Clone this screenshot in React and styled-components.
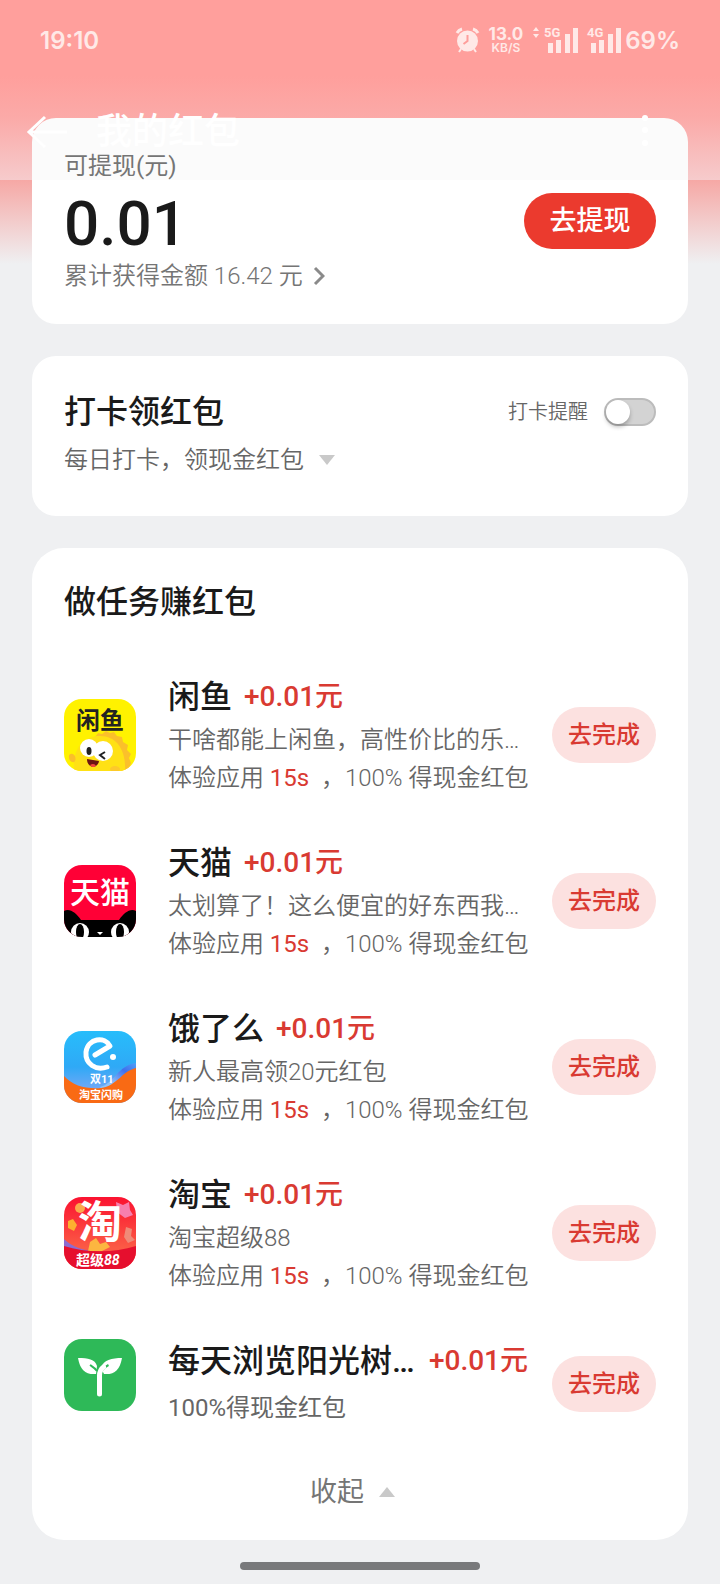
import { useState } from "react";
import { createGlobalStyle, styled } from "styled-components";

const tasks = [
  {
    id: "xianyu",
    name: "闲鱼",
    desc: "干啥都能上闲鱼，高性价比的乐…",
    icon: <XianyuIcon />,
  },
  {
    id: "tmall",
    name: "天猫",
    desc: "太划算了！这么便宜的好东西我…",
    icon: <TmallIcon />,
  },
  {
    id: "eleme",
    name: "饿了么",
    desc: "新人最高领20元红包",
    icon: <ElemeIcon />,
  },
  {
    id: "taobao",
    name: "淘宝",
    desc: "淘宝超级88",
    icon: <TaobaoIcon />,
  },
];

export default function App() {
  const [remind, setRemind] = useState(false);

  return (
    <Page>
      <GlobalStyle />
      <Header>
        <StatusBar>
          <span>19:10</span>
          <StatusIcons>
            <AlarmIcon />
            <Speed>
              <b>13.0</b>
              <small>KB/S</small>
            </Speed>
            <Signals>
              <DataArrows />
              <Signal label="5G" />
            </Signals>
            <Signals>
              <Signal label="4G" />
              <span>69%</span>
            </Signals>
          </StatusIcons>
        </StatusBar>
        <NavBar>
          <IconButton aria-label="返回">
            <svg width="44" height="36" fill="none" stroke="#fff" strokeWidth="3">
              <path d="M21 3 5 18l16 15M5 18h38" />
            </svg>
          </IconButton>
          <h1>我的红包</h1>
          <IconButton aria-label="更多">
            <svg width="8" height="36" fill="#fff">
              <circle cx="4" cy="4" r="3" />
              <circle cx="4" cy="16" r="3" />
              <circle cx="4" cy="29" r="3" />
            </svg>
          </IconButton>
        </NavBar>
      </Header>

      <Content>
        <BalanceCard>
          <BalanceInfo>
            <BalanceLabel>可提现(元)</BalanceLabel>
            <Amount>0.01</Amount>
            <TotalLink href="#total">
              累计获得金额 16.42 元
              <svg width="12" height="20" fill="none" stroke="#8a8a8a" strokeWidth="3">
                <path d="m2 2 8 8-8 8" />
              </svg>
            </TotalLink>
          </BalanceInfo>
          <WithdrawButton>去提现</WithdrawButton>
        </BalanceCard>

        <Card>
          <CheckInHead>
            <h2>打卡领红包</h2>
            <RemindLabel>
              打卡提醒
              <Switch
                type="checkbox"
                role="switch"
                checked={remind}
                onChange={() => setRemind(!remind)}
              />
            </RemindLabel>
          </CheckInHead>
          <CheckInButton>
            每日打卡，领现金红包
            <Triangle />
          </CheckInButton>
        </Card>

        <TaskCard>
          <h2>做任务赚红包</h2>
          <TaskList>
            {tasks.map((task) => (
              <Task key={task.id}>
                {task.icon}
                <TaskBody>
                  <TaskHead>
                    <h3>{task.name}</h3>
                    <Reward>+0.01元</Reward>
                  </TaskHead>
                  <TaskLine>{task.desc}</TaskLine>
                  <TaskLine>
                    体验应用 <em>15s</em>
                    {"  "}，100% 得现金红包
                  </TaskLine>
                </TaskBody>
                <TaskButton>去完成</TaskButton>
              </Task>
            ))}
            <Task>
              <SproutIcon />
              <TaskBody>
                <TaskHead $fill>
                  <h3>每天浏览阳光树…</h3>
                  <Reward>+0.01元</Reward>
                </TaskHead>
                <TaskNote>100%得现金红包</TaskNote>
              </TaskBody>
              <TaskButton>去完成</TaskButton>
            </Task>
          </TaskList>
          <FoldButton>
            收起
            <Triangle up />
          </FoldButton>
        </TaskCard>
      </Content>
      <HomeBar />
    </Page>
  );
}

function Triangle({ up }) {
  return (
    <svg width="46" height="10" fill="#c9c9c9">
      <path d={up ? "M15 10 23 0l8 10z" : "M15 0h16l-8 10z"} />
    </svg>
  );
}

function AlarmIcon() {
  return (
    <svg width="25" height="26" fill="#ffe9e7">
      <path
        d="M2 6a8 8 0 0 1 5-4M23 6a8 8 0 0 0-5-4"
        fill="none"
        stroke="#ffe9e7"
        strokeWidth="3"
      />
      <circle cx="12.500" cy="14" r="10.500" />
      <path d="m6 22-2 3M19 22l2 3" stroke="#ffe9e7" strokeWidth="2" />
      <path d="M12.500 8v6l-4 3" fill="none" stroke="#fe9e9b" strokeWidth="2" />
    </svg>
  );
}

function DataArrows() {
  return (
    <svg width="8" height="26" fill="#ffe9e7">
      <path d="M1 4 4 0l3 4zM1 7h6l-3 4z" />
    </svg>
  );
}

function Signal({ label }) {
  return (
    <SignalIcon width="34" height="26" fill="#ffe9e7">
      <text x="0" y="10" fontFamily="Roboto" fontSize="13" fontWeight="700">
        {label}
      </text>
      <path d="M4 16h5v10H4zM12 13h5v13h-5zM21 7h5v19h-5zM29 1h5v25h-5z" />
    </SignalIcon>
  );
}

function XianyuIcon() {
  return (
    <AppIcon viewBox="0 0 72 72">
      <rect width="72" height="72" fill="#fff200" />
      <path
        d="M31 38l3-4 4 1 4-3 4 2 4-1 3 4 5 1 1 5 5 3-1 5 4 4-2 4 2 5-3 8H40z"
        fill="#fbc02a"
      />
      <path d="M10 72C8 50 19 37 36 37c18 0 26 16 25 35z" fill="#ffe115" />
      <path d="M5 56c4-4 8 2 6 6-2 3-7 0-6-6z" fill="#fbbf2a" />
      <ellipse cx="51" cy="70" rx="5" ry="3" fill="#fdc92b" />
      <circle cx="25" cy="49" r="9" fill="#fff" />
      <circle cx="39" cy="52" r="10" fill="#fff" />
      <ellipse cx="25" cy="52" rx="2.500" ry="4" fill="#222" />
      <path d="m41 53-5 3 5 4" fill="none" stroke="#222" strokeWidth="2" />
      <path d="M23 60l12 2c-1 8-12 8-12-2z" fill="#6d1512" />
      <path d="M26 66c3-2 5-1 6 1-2 2-5 1-6-1z" fill="#f4473d" />
      <text x="12" y="30" fontSize="24" fontWeight="700" fill="#222">
        闲鱼
      </text>
    </AppIcon>
  );
}

function TmallIcon() {
  return (
    <AppIcon viewBox="0 0 72 72">
      <rect width="72" height="72" fill="#ff0036" />
      <text x="6" y="38" fontSize="30" fontWeight="500" fill="#fff">
        天猫
      </text>
      <path d="M0 46c6-3 12 2 17 9h38c5-7 11-12 17-9v26H0z" fill="#000" />
      <ellipse cx="16" cy="67" rx="9" ry="9" fill="#fff" />
      <ellipse cx="56" cy="67" rx="9" ry="9" fill="#fff" />
      <ellipse cx="16" cy="67" rx="4" ry="8" fill="#000" />
      <ellipse cx="56" cy="67" rx="4" ry="8" fill="#000" />
      <path d="M33 67h6l-3 3z" fill="#fff" />
    </AppIcon>
  );
}

function ElemeIcon() {
  return (
    <AppIcon viewBox="0 0 72 72">
      <defs>
        <linearGradient id="eleme-sky" x2="0" y2="1">
          <stop offset="0" stopColor="#27bdfb" />
          <stop offset="0.500" stopColor="#2fa9f6" />
          <stop offset="0.800" stopColor="#6fa8f6" />
        </linearGradient>
        <linearGradient id="eleme-fold" x1="0" x2="1" y1="1" y2="0">
          <stop offset="0.300" stopColor="#8fc3fa" />
          <stop offset="0.700" stopColor="#3f6fec" />
          <stop offset="1" stopColor="#4fa0f8" />
        </linearGradient>
      </defs>
      <rect width="72" height="72" fill="url(#eleme-sky)" />
      <path d="M36 56c14-3 18-22 36-24v18L40 60z" fill="url(#eleme-fold)" />
      <path d="M0 45c9 10 22 13 37 12 16-2 21-17 35-20v35H0z" fill="#f96a14" />
      <path
        d="M31 24 46 15C41 5 24 7 22 21c-1 12 10 19 21 15"
        fill="none"
        stroke="#fff"
        strokeWidth="5"
        strokeLinecap="round"
        strokeLinejoin="round"
      />
      <circle cx="49" cy="26" r="3" fill="#fff" />
      <text x="26" y="52" fontSize="11" fontWeight="700" fill="#fff">
        双11
      </text>
      <text x="15" y="68" fontSize="11" fontWeight="700" fill="#fff">
        淘宝闪购
      </text>
    </AppIcon>
  );
}

function TaobaoIcon() {
  return (
    <AppIcon viewBox="0 0 72 72">
      <defs>
        <linearGradient id="taobao-bg" x2="0" y2="1">
          <stop offset="0" stopColor="#fb1230" />
          <stop offset="0.700" stopColor="#fb5a45" />
        </linearGradient>
      </defs>
      <rect width="72" height="72" fill="url(#taobao-bg)" />
      <path d="M0 42c8 8 20 12 32 12L0 55z" fill="#8d6bd0" />
      <circle cx="16" cy="11" r="5" fill="#fba94c" />
      <path d="M52 5l7 3 6-3 1 8 3 5-8 3-8-6z" fill="#f77fae" />
      <path d="M4 24l5-2 4 6-3 6-6-3z" fill="#fdb02f" />
      <path d="M62 30l6 2-1 7 4 4-7 3-4-6z" fill="#f08a78" />
      <path d="M26 45l6-4 4 6 6-2 4 5-8 4H24z" fill="#fcb640" />
      <text x="14" y="41" fontSize="44" fontWeight="700" fill="#fff">
        淘
      </text>
      <path d="M0 49c22 7 50 7 72 0v23H0z" fill="#e60f2e" />
      <text x="12" y="68" fontSize="14" fontWeight="700" fill="#fff">
        超级
        <tspan fontStyle="italic">88</tspan>
      </text>
    </AppIcon>
  );
}

function SproutIcon() {
  return (
    <AppIcon viewBox="0 0 72 72" $top>
      <rect width="72" height="72" fill="#2eb958" />
      <path d="M14 19c10 0 17 1 19 8l-1 8c-10 1-16-4-18-16z" fill="#fff" />
      <path d="M58 19c-10 0-19 2-21 10l3 6c10 1 16-4 18-16z" fill="#fff" />
      <path
        d="M35.500 55V39c0-6 3-10 9-13M33 32c-2-3-4-4-7-6"
        fill="none"
        stroke="#2eb958"
        strokeWidth="2"
      />
      <path
        d="M35.500 55V37c0-5 1-7 4-9"
        fill="none"
        stroke="#fff"
        strokeWidth="5"
        strokeLinecap="round"
      />
    </AppIcon>
  );
}

const GlobalStyle = createGlobalStyle`
  * {
    box-sizing: border-box;
    margin: 0;
    padding: 0;
  }
  body {
    background: #eff0f2;
    color: #1a1a1a;
    font-family: Roboto, "Noto Sans CJK SC", sans-serif;
  }
  button {
    border: none;
    background: none;
    font-family: inherit;
    cursor: pointer;
  }
  h2, h3 {
    font-size: 32px;
    font-weight: 500;
  }
`;

const Page = styled.div`
  position: relative;
  min-height: 100vh;
  background: linear-gradient(
      #ff9f9c 76px,
      #fbaaa8 118px,
      #f6cbcc 180px,
      #f6a8a5 180px,
      #eff0f2 264px
    )
    no-repeat;
`;

const Header = styled.header`
  position: absolute;
  top: 0;
  left: 0;
  right: 0;
`;

const StatusBar = styled.div`
  display: flex;
  justify-content: space-between;
  align-items: center;
  height: 80px;
  padding: 0 40px;
  color: #ffe9e7;
  font-family: Inter, sans-serif;
  font-size: 24px;
  font-weight: 600;
`;

const StatusIcons = styled.div`
  display: flex;
  align-items: center;
  gap: 9px;
`;

const Speed = styled.div`
  display: flex;
  flex-direction: column;
  align-items: center;
  b {
    font-size: 17px;
    font-weight: 700;
    line-height: 15px;
  }
  small {
    font-size: 12px;
    line-height: 12px;
  }
`;

const Signals = styled.div`
  display: flex;
  align-items: center;
  gap: 4px;
`;

const SignalIcon = styled.svg`
  overflow: visible;
`;

const NavBar = styled.nav`
  display: flex;
  align-items: center;
  height: 104px;
  padding: 0 71px 0 24px;
  color: #fff;
  h1 {
    flex: 1;
    margin-left: 28px;
    font-size: 36px;
    font-weight: 500;
    line-height: 36px;
  }
`;

const IconButton = styled.button`
  display: flex;
`;

const Content = styled.main`
  display: flex;
  flex-direction: column;
  gap: 32px;
  padding: 118px 32px 22px;
`;

const Card = styled.section`
  padding: 32px;
  border-radius: 24px;
  background: #fff;
`;

const BalanceCard = styled(Card)`
  display: flex;
  justify-content: space-between;
  align-items: center;
  background: linear-gradient(#fbfbfb 62px, #fff 62px);
`;

const BalanceInfo = styled.div`
  padding-bottom: 6px;
`;

const BalanceLabel = styled.p`
  color: #757575;
  font-size: 24px;
  line-height: 32px;
`;

const Amount = styled.p`
  font-size: 62px;
  font-weight: 500;
  line-height: 84px;
`;

const TotalLink = styled.a`
  display: flex;
  align-items: center;
  gap: 10px;
  color: #757575;
  font-size: 24px;
  font-weight: 350;
  line-height: 20px;
  text-decoration: none;
`;

const WithdrawButton = styled.button`
  width: 132px;
  height: 56px;
  border-radius: 28px;
  background: #eb3a2e;
  color: #fff;
  font-size: 27px;
  font-weight: 500;
  line-height: 56px;
`;

const CheckInHead = styled.div`
  display: flex;
  justify-content: space-between;
  align-items: center;
  line-height: 48px;
`;

const RemindLabel = styled.label`
  display: flex;
  align-items: center;
  gap: 16px;
  color: #666;
  font-size: 20px;
  font-weight: 350;
`;

const Switch = styled.input`
  display: flex;
  justify-content: ${(props) => (props.checked ? "flex-end" : "flex-start")};
  width: 52px;
  height: 28px;
  border: 2px solid #bcbcbc;
  border-radius: 14px;
  background: ${(props) => (props.checked ? "#eb3a2e" : "#d3d3d3")};
  appearance: none;
  &::before {
    content: "";
    width: 24px;
    height: 24px;
    border-radius: 50%;
    background: #fff;
    box-shadow: 0 3px 4px rgba(0, 0, 0, 0.25);
  }
`;

const CheckInButton = styled.button`
  display: flex;
  align-items: center;
  color: #666;
  font-size: 24px;
  font-weight: 350;
  line-height: 48px;
`;

const TaskCard = styled(Card)`
  padding-bottom: 0;
  border-radius: 32px;
  > h2 {
    line-height: 44px;
  }
`;

const TaskList = styled.ul`
  display: flex;
  flex-direction: column;
  gap: 42px;
  margin-top: 49px;
  list-style: none;
`;

const Task = styled.li`
  display: flex;
  align-items: center;
`;

const AppIcon = styled.svg`
  flex-shrink: 0;
  align-self: ${(props) => (props.$top ? "flex-start" : "center")};
  width: 72px;
  height: 72px;
  margin-top: ${(props) => (props.$top ? "2px" : "0")};
  border-radius: 18px;
`;

const TaskBody = styled.div`
  flex: 1;
  min-width: 0;
  margin: 0 24px 0 32px;
`;

const TaskHead = styled.div`
  display: flex;
  align-items: center;
  justify-content: ${(props) => (props.$fill ? "space-between" : "flex-start")};
  gap: 12px;
  line-height: 48px;
`;

const Reward = styled.span`
  color: #d93a32;
  font-size: 28px;
  font-weight: 500;
`;

const TaskLine = styled.p`
  color: #666;
  font-size: 24px;
  font-weight: 350;
  line-height: 38px;
  white-space: pre;
  em {
    color: #d93a32;
    font-style: normal;
    font-weight: 400;
  }
`;

const TaskNote = styled.p`
  color: #666;
  font-size: 24px;
  line-height: 46px;
`;

const TaskButton = styled.button`
  width: 104px;
  height: 56px;
  border-radius: 28px;
  background: #fce1e0;
  color: #d93a32;
  font-size: 24px;
  font-weight: 500;
  line-height: 56px;
`;

const FoldButton = styled.button`
  display: flex;
  justify-content: center;
  align-items: center;
  width: 100%;
  height: 96px;
  margin-top: 13px;
  color: #757575;
  font-size: 27px;
  line-height: 56px;
`;

const HomeBar = styled.div`
  width: 240px;
  height: 8px;
  margin: 0 auto;
  border-radius: 4px;
  background: #78797b;
`;
